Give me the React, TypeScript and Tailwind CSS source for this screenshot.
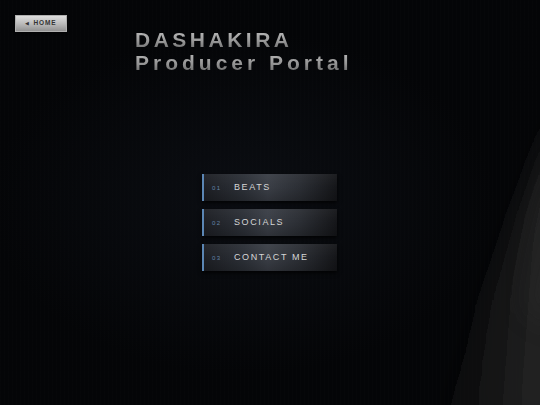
import React from "react";

const items = [
  { n: "01", label: "BEATS" },
  { n: "02", label: "SOCIALS" },
  { n: "03", label: "CONTACT ME" },
];

export default function App() {
  return (
    <div
      className="relative w-[540px] h-[405px] overflow-hidden bg-[#040507]"
      style={{ fontFamily: '"Liberation Sans", Arial, sans-serif' }}
    >
      <div className="pointer-events-none absolute inset-0 bg-[repeating-linear-gradient(90deg,rgba(255,255,255,0.006)_0px,rgba(255,255,255,0.006)_1px,transparent_1px,transparent_4px)]" />
      <div className="pointer-events-none absolute inset-0 bg-[radial-gradient(ellipse_at_45%_50%,rgba(18,22,30,0.5)_0%,rgba(0,0,0,0)_60%)]" />
      <svg
        className="pointer-events-none absolute inset-0"
        width="540"
        height="405"
        viewBox="0 0 540 405"
      >
        <defs>
          <linearGradient id="sweep" x1="0" y1="0" x2="1" y2="0.2">
            <stop offset="0" stopColor="#141414" stopOpacity="0" />
            <stop offset="0.45" stopColor="#161616" stopOpacity="0.7" />
            <stop offset="1" stopColor="#262626" stopOpacity="1" />
          </linearGradient>
          <filter id="blur" x="-50%" y="-50%" width="200%" height="200%">
            <feGaussianBlur stdDeviation="12" />
          </filter>
        </defs>
        <path
          d="M560 110 C 535 170, 505 240, 485 300 C 472 340, 458 380, 445 420 L 560 420 Z"
          fill="url(#sweep)"
          filter="url(#blur)"
        />
        <path
          d="M560 150 C 545 200, 532 250, 524 310 L 560 330 Z"
          fill="#2c2c2c"
          opacity="0.35"
          filter="url(#blur)"
        />
      </svg>

      <div className="relative flex flex-col">
        <div className="flex items-start">
          <button className="ml-[15px] mt-[15px] flex h-[17px] w-[52px] items-center justify-center gap-[4px] border border-[#b0b0b0] bg-[linear-gradient(180deg,#dedede_0%,#bcbcbc_50%,#929292_100%)] text-[#333333] shadow-[0_1px_2px_rgba(0,0,0,0.6)]">
            <span className="text-[5px] leading-none">◀</span>
            <span className="text-[6.5px] font-bold leading-none tracking-[0.9px]">HOME</span>
          </button>
          <div className="ml-[68px] mt-[28px] flex flex-col text-[21px] font-bold leading-[23px]">
            <span className="bg-[linear-gradient(180deg,#c2c2c2_0%,#9a9a9a_55%,#686868_100%)] bg-clip-text tracking-[3.5px] text-transparent">
              DASHAKIRA
            </span>
            <span className="bg-[linear-gradient(180deg,#bdbdbd_0%,#959595_55%,#626262_100%)] bg-clip-text tracking-[4px] text-transparent">
              Producer Portal
            </span>
          </div>
        </div>

        <div className="ml-[202px] mt-[100px] flex w-[135px] flex-col gap-[8px]">
          {items.map((it) => (
            <div
              key={it.n}
              className="relative flex h-[27px] items-center border-l-2 border-[#5b86b4] bg-[linear-gradient(90deg,#1d1f24_0%,#2c3037_30%,#3a3e46_48%,#2b2e34_72%,#141518_100%)] pl-[8px] shadow-[0_2px_4px_rgba(0,0,0,0.8)]"
            >
              <div className="pointer-events-none absolute inset-0 bg-[linear-gradient(180deg,rgba(255,255,255,0.04)_0%,rgba(0,0,0,0)_50%,rgba(0,0,0,0.2)_100%)]" />
              <span className="relative w-[22px] text-[6px] leading-none tracking-[1.5px] text-[#6283a8]">
                {it.n}
              </span>
              <span className="relative text-[9px] leading-none tracking-[1.6px] text-[#d6d6d6]">
                {it.label}
              </span>
            </div>
          ))}
        </div>
      </div>
    </div>
  );
}
